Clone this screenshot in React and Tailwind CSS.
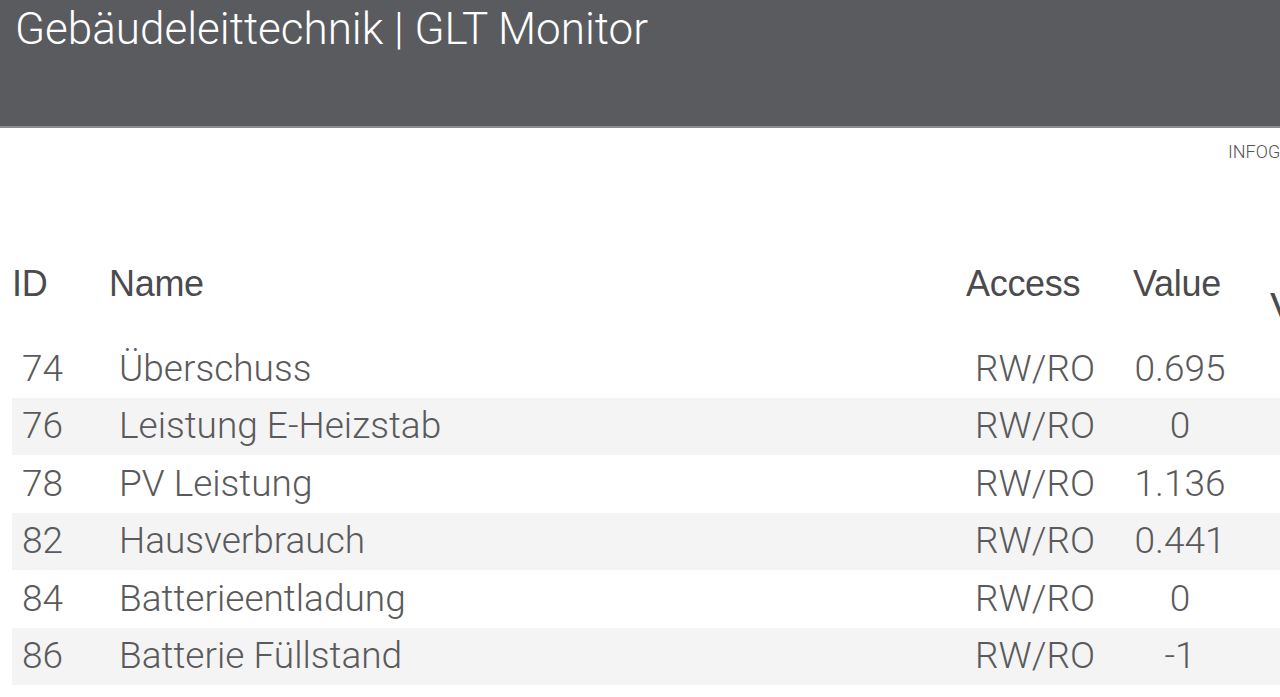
import React from "react";

const rows = [
  { id: 74, name: "Überschuss", access: "RW/RO", value: "0.695" },
  { id: 76, name: "Leistung E-Heizstab", access: "RW/RO", value: "0" },
  { id: 78, name: "PV Leistung", access: "RW/RO", value: "1.136" },
  { id: 82, name: "Hausverbrauch", access: "RW/RO", value: "0.441" },
  { id: 84, name: "Batterieentladung", access: "RW/RO", value: "0" },
  { id: 86, name: "Batterie Füllstand", access: "RW/RO", value: "-1" },
];

const cols = "grid grid-cols-[96px_858px_158px_112px_200px]";

export default function App() {
  return (
    <div className="w-[1280px] h-[697px] overflow-hidden bg-white font-['Liberation_Sans',Arial,sans-serif]">
      {/* HEADER */}
      <div className="h-[128px] bg-[#5a5b5f] border-b-2 border-[#8b8c90]">
        <h1 className="pl-[15px] pt-[2px] text-[44px] leading-[54px] text-white font-light font-['Roboto',sans-serif] whitespace-nowrap">
          Gebäudeleittechnik | GLT Monitor
        </h1>
      </div>

      {/* INFO LINK */}
      <div className="flex justify-end pt-[13px]">
        <div className="w-[52px] overflow-hidden whitespace-nowrap text-[18px] leading-[21px] text-[#555] font-light font-['Roboto',sans-serif]">
          INFOGRAFIK
        </div>
      </div>

      {/* TABLE */}
      <div className="ml-[12px] mt-[102px]">
        <div className={`${cols} h-[76px] items-start text-[36px] leading-[40px] text-[#4b4b4d] tracking-[-0.3px] whitespace-nowrap`}>
          <div>ID</div>
          <div className="pl-[1px]">Name</div>
          <div>Access</div>
          <div className="pl-[9px]">Value</div>
          <div className="pl-[34px] pt-[20px] text-[42px] leading-[48px]">Verlauf</div>
        </div>

        {rows.map((r, i) => (
          <div
            key={r.id}
            className={`${cols} h-[57.5px] items-center text-[37px] leading-[40px] text-[#5a5a5c] font-light font-['Roboto',sans-serif] whitespace-nowrap ${i % 2 === 1 ? "bg-[#f4f4f4]" : ""}`}
          >
            <div className="pl-[10px]">{r.id}</div>
            <div className="pl-[11px]">{r.name}</div>
            <div className="pl-[9px]">{r.access}</div>
            <div className="text-center">{r.value}</div>
            <div></div>
          </div>
        ))}
      </div>
    </div>
  );
}
